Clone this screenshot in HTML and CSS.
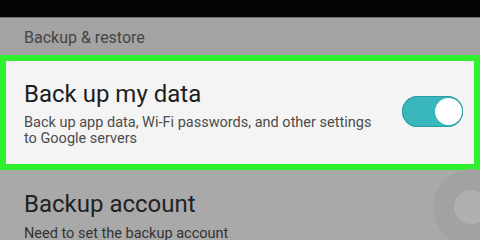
FILE: index.html
```html
<!DOCTYPE html>
<html>
<head>
<meta charset="utf-8">
<link rel="stylesheet" href="styles.css">
</head>
<body>
<div class="screen">
  <div class="status"></div>
  <div class="section-header">Backup &amp; restore</div>
  <div class="highlight">
    <div class="item-text">
      <div class="title">Back up my data</div>
      <div class="sub">Back up app data, Wi-Fi passwords, and other settings<br>to Google servers</div>
    </div>
    <div class="toggle"><div class="thumb"></div></div>
  </div>
  <div class="item">
    <div class="title">Backup account</div>
    <div class="sub">Need to set the backup account</div>
  </div>
  <div class="ripple"><div class="ripple-core"></div></div>
</div>
</body>
</html>
```
FILE: styles.css
```css
html, body {
  margin: 0;
  padding: 0;
}
body {
  width: 480px;
  height: 240px;
  overflow: hidden;
  font-family: Roboto, "Noto Sans", sans-serif;
}
.screen {
  position: relative;
  width: 480px;
  height: 240px;
  background: #a9a9a9;
  overflow: hidden;
}
.status {
  height: 17px;
  background: #050505;
  border-bottom: 1px solid #6a6a6a;
}
.section-header {
  height: 26px;
  padding: 11px 0 0 24px;
  background: #a3a3a3;
  color: #454545;
  font-size: 16px;
  line-height: 18px;
}
.highlight {
  display: flex;
  align-items: flex-start;
  height: 84px;
  border: 6px solid #2ff02f;
  background: #f4f4f4;
  padding: 19px 11px 0 18px;
  box-sizing: content-box;
  width: 439px;
}
.item-text {
  flex: 1;
}
.title {
  font-size: 24px;
  line-height: 28px;
  color: #1e1e1e;
}
.sub {
  margin-top: 7px;
  font-size: 14.5px;
  line-height: 16px;
  color: #4c4c4c;
}
.toggle {
  margin-top: 16px;
  width: 61px;
  height: 31px;
  border-radius: 16px;
  background: #3ab6bd;
  box-shadow: inset 0 0 0 1px #2c9ea5;
  position: relative;
  box-sizing: border-box;
}
.thumb {
  position: absolute;
  right: 1px;
  top: 2px;
  width: 27px;
  height: 27px;
  border-radius: 50%;
  background: #ffffff;
}
.item {
  padding: 20px 0 0 24px;
}
.item .title {
  color: #222222;
}
.item .sub {
  margin-top: 8px;
  color: #333333;
}
.ripple {
  position: absolute;
  left: 433px;
  top: 169px;
  width: 76px;
  height: 76px;
  border-radius: 50%;
  background: #a2a2a2;
  display: flex;
  align-items: center;
  justify-content: center;
}
.ripple-core {
  width: 34px;
  height: 34px;
  border-radius: 50%;
  background: #b0b0b0;
}
```
